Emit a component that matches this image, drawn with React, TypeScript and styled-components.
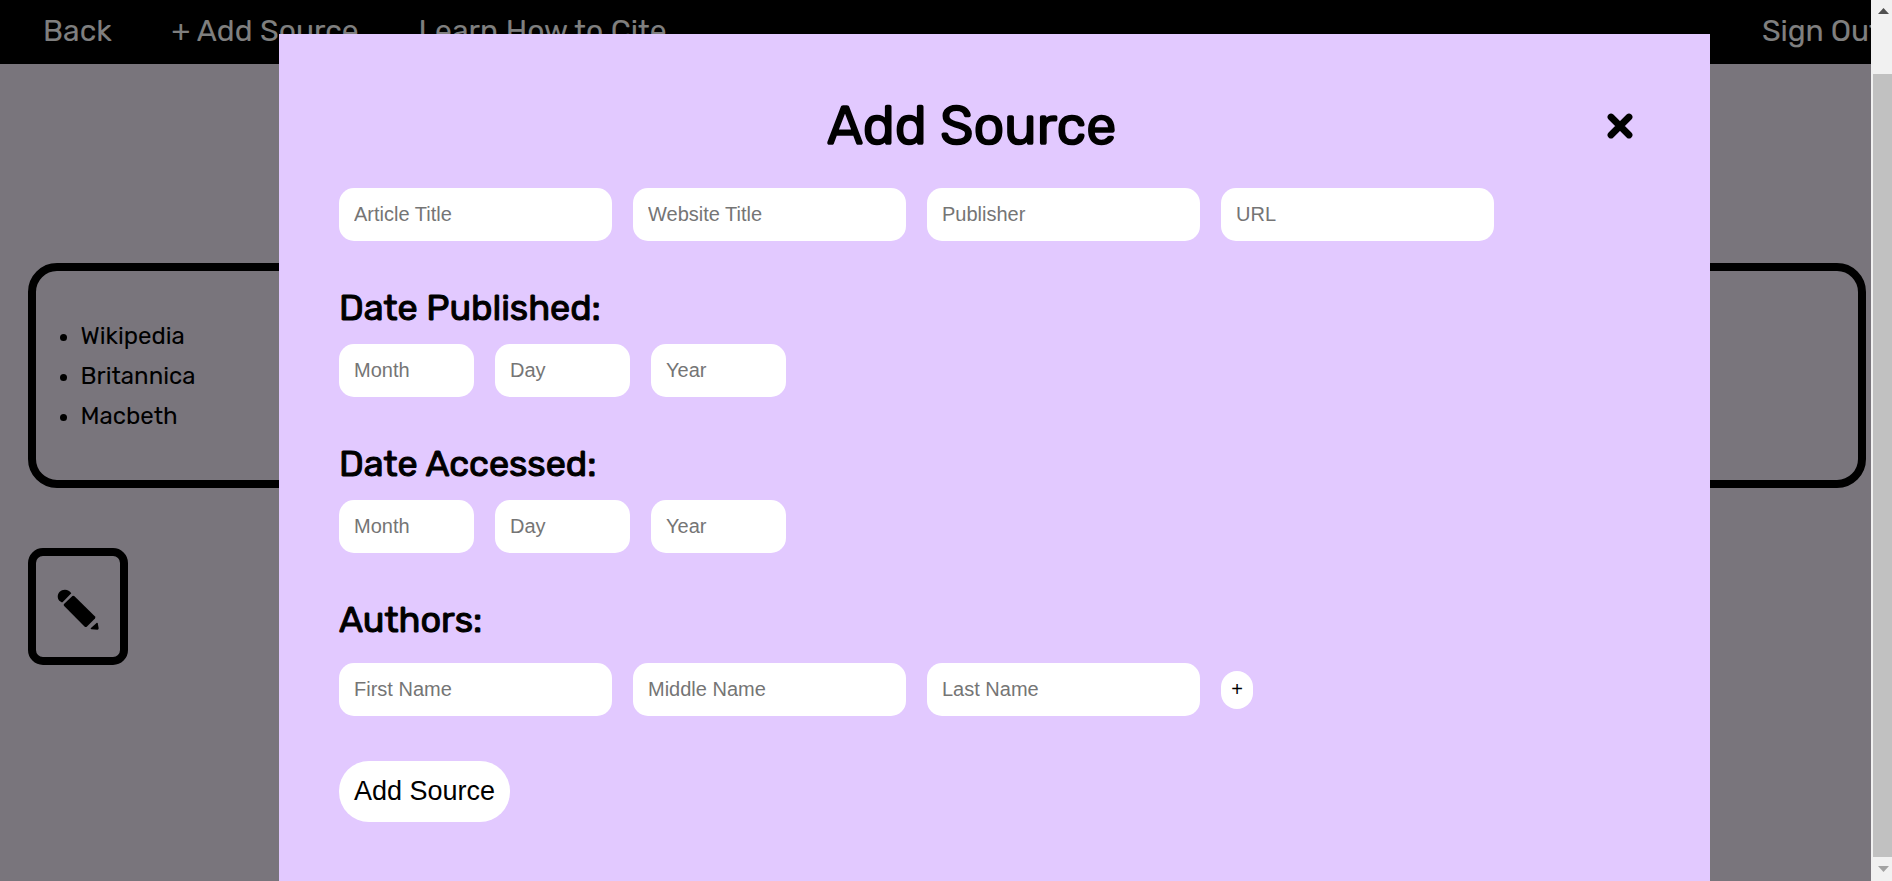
import React from "react";
import styled, { createGlobalStyle } from "styled-components";

const display = `Rubik, Roboto, "Liberation Sans", sans-serif`;
const ui = `Arial, "Liberation Sans", sans-serif`;

const GlobalStyle = createGlobalStyle`
  * { box-sizing: border-box; }
  body { margin: 0; overflow: hidden; }
`;

const Shell = styled.div`
  position: relative;
  display: grid;
  grid-template-columns: minmax(0, 1fr) 21px;
  height: 100vh;
  overflow: hidden;
`;

const Page = styled.div`
  overflow: hidden;
  background: #f3ebf9;
  color: #000;
  font-family: ${display};
`;

const NavBar = styled.nav`
  display: flex;
  height: 64px;
  padding: 13px 0 0 43px;
  background: #000;
`;

const NavLink = styled.a<{ $width: number }>`
  flex: none;
  width: ${(p) => p.$width}px;
  color: #fff;
  font-size: 30px;
  line-height: 37px;
  letter-spacing: 0.05px;
  white-space: nowrap;
`;

const SignOut = styled(NavLink)`
  margin-left: auto;
  letter-spacing: -0.1px;
`;

const Sources = styled.ul`
  display: flex;
  flex-direction: column;
  justify-content: center;
  width: 1838px;
  height: 225px;
  margin: 199px 0 0 28px;
  padding: 1px 0 0 17px;
  border: 8px solid #000;
  border-radius: 29px;
  list-style: none;
`;

const Source = styled.li`
  display: flex;
  align-items: center;
  gap: 13.5px;
  font-size: 24px;
  font-weight: 370;
  line-height: 40px;

  &::before {
    content: "";
    width: 7px;
    height: 7px;
    margin-left: 7px;
    margin-top: 3px;
    border-radius: 50%;
    background: #000;
  }
`;

const EditButton = styled.button`
  display: flex;
  align-items: center;
  justify-content: center;
  width: 100px;
  height: 117px;
  margin: 60px 0 0 28px;
  padding: 6px 0 0;
  border: 8px solid #000;
  border-radius: 15px;
  background: none;
`;

const Backdrop = styled.div`
  position: absolute;
  inset: 0 21px 0 0;
  display: flex;
  padding: 34px 0 0 279px;
  background: rgba(0, 0, 0, 0.5);
`;

const Modal = styled.section`
  width: 1431px;
  padding: 0 60px;
  background: #e2c9ff;
  font-family: ${display};
`;

const ModalHeader = styled.header`
  display: flex;
  align-items: center;
  justify-content: space-between;
  height: 154px;
  padding: 30px 17px 0 488px;
`;

const Title = styled.h1`
  margin: 0;
  font-size: 53.8px;
  font-weight: 400;
  line-height: 66px;
  -webkit-text-stroke: 1.6px #000;
  white-space: nowrap;
`;

const CloseButton = styled.button`
  display: flex;
  padding: 0;
  border: 0;
  background: none;
`;

const SectionTitle = styled.h2<{ $gap?: number }>`
  margin: 46px 0 ${(p) => p.$gap ?? 15}px;
  font-size: 36px;
  font-weight: 400;
  line-height: 42px;
  letter-spacing: -0.04px;
  -webkit-text-stroke: 1.05px #000;
`;

const FieldRow = styled.div`
  display: flex;
  align-items: center;
  gap: 21px;
`;

const Field = styled.input<{ $short?: boolean }>`
  width: ${(p) => (p.$short ? 135 : 273)}px;
  height: 53px;
  padding: 0 15px;
  border: 0;
  border-radius: 15px;
  background: #fff;
  font: 20px ${ui};

  &::placeholder {
    color: #757575;
  }
`;

const PillButton = styled.button`
  border: 0;
  background: #fff;
  color: #000;
  font-family: ${ui};
  white-space: nowrap;
`;

const AddAuthor = styled(PillButton)`
  width: 32px;
  height: 38px;
  padding: 0;
  border-radius: 16px;
  font-size: 20px;
`;

const Submit = styled(PillButton)`
  width: 171px;
  height: 61px;
  margin-top: 45px;
  padding: 0;
  border-radius: 30px;
  font-size: 27px;
`;

const ScrollTrack = styled.div`
  display: flex;
  flex-direction: column;
  align-items: center;
  padding: 8px 0 9px 2px;
  background: #f1f1f1;
`;

const ScrollThumb = styled.div`
  flex: 1;
  align-self: stretch;
  margin: 60px 0 9px;
  background: #c1c1c1;
`;

const Arrow = styled.svg`
  display: block;
  margin-left: 1px;
`;

const DateFields = () => (
  <FieldRow>
    <Field $short placeholder="Month" />
    <Field $short placeholder="Day" />
    <Field $short placeholder="Year" />
  </FieldRow>
);

export default function App() {
  return (
    <>
      <GlobalStyle />
      <Shell>
        <Page>
          <NavBar>
            <NavLink $width={128.5}>Back</NavLink>
            <NavLink $width={247}>+ Add Source</NavLink>
            <NavLink $width={260}>Learn How to Cite</NavLink>
            <SignOut $width={109}>Sign Out</SignOut>
          </NavBar>
          <Sources>
            <Source>Wikipedia</Source>
            <Source>Britannica</Source>
            <Source>Macbeth</Source>
          </Sources>
          <EditButton aria-label="Edit">
            <svg width="42" height="42" viewBox="0 0 42 42">
              <path d="M2.3 11.8 C-1.5 7 2 .7 8 .8 C10.8.8 12.8 2 14.3 4.2 L5.8 13.1 Q5 13.8 4.2 13.1Z" />
              <path d="M7 14.9 L15.4 7 Q16.5 6.3 17.5 7.2 L37.8 27.2 Q38.9 28.3 38 29.4 L30 37.4 Q28.7 38.5 27.5 37.4 L7.2 17.1 Q6.2 16 7 14.9Z" />
              <path d="M33.7 39.3 L39.8 33.7 Q40.5 33.5 40.8 34.4 L41.7 39.2 Q41.7 40.4 40.5 40.7 L34.6 40.3 Q33.5 40.1 33.7 39.3Z" />
            </svg>
          </EditButton>
        </Page>
        <ScrollTrack>
          <Arrow width="11" height="6" viewBox="0 0 11 6"><path fill="#505050" d="M5.5 0 L11 6 H0Z" /></Arrow>
          <ScrollThumb />
          <Arrow width="11" height="6" viewBox="0 0 11 6"><path fill="#a3a3a3" d="M0 0 H11 L5.5 6Z" /></Arrow>
        </ScrollTrack>
        <Backdrop>
          <Modal>
            <ModalHeader>
              <Title>Add Source</Title>
              <CloseButton aria-label="Close">
                <svg width="26" height="26" viewBox="0 0 26 26">
                  <path d="M4 4 L22 22 M22 4 L4 22" stroke="#000" strokeWidth="6.8" strokeLinecap="round" />
                </svg>
              </CloseButton>
            </ModalHeader>
            <FieldRow>
              <Field placeholder="Article Title" />
              <Field placeholder="Website Title" />
              <Field placeholder="Publisher" />
              <Field placeholder="URL" />
            </FieldRow>
            <SectionTitle>Date Published:</SectionTitle>
            <DateFields />
            <SectionTitle>Date Accessed:</SectionTitle>
            <DateFields />
            <SectionTitle $gap={22}>Authors:</SectionTitle>
            <FieldRow>
              <Field placeholder="First Name" />
              <Field placeholder="Middle Name" />
              <Field placeholder="Last Name" />
              <AddAuthor>+</AddAuthor>
            </FieldRow>
            <Submit>Add Source</Submit>
          </Modal>
        </Backdrop>
      </Shell>
    </>
  );
}
